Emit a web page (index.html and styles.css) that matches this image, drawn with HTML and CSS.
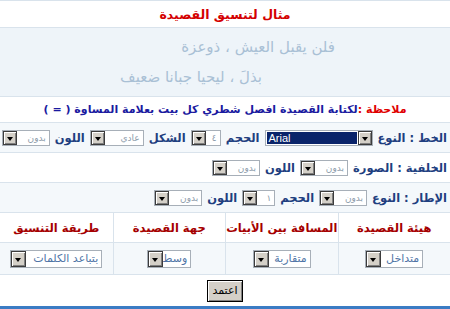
FILE: index.html
```html
<!DOCTYPE html>
<html lang="ar" dir="rtl">
<head>
<meta charset="utf-8">
<link rel="stylesheet" href="styles.css">
</head>
<body>
<div class="panel">
  <div class="row title">مثال لتنسيق القصيدة</div>
  <div class="row poem">
    <div class="verse v1">فلن يقبل العيش ، ذوعزة</div>
    <div class="verse v2">بذلَ ، ليحيا جبانا ضعيف</div>
  </div>
  <div class="row note"><span class="red">ملاحظة :</span> لكتابة القصيدة افصل شطري كل بيت بعلامة المساوة ( = )</div>
  <div class="row ctrl alt">
    <span class="lbl">الخط : النوع</span>
    <span class="sel font" dir="ltr"><span class="txt">Arial</span><span class="arr"></span></span>
    <span class="lbl">الحجم</span>
    <span class="sel w30"><span class="txt">٤</span><span class="arr"></span></span>
    <span class="lbl">الشكل</span>
    <span class="sel w54"><span class="txt">عادي</span><span class="arr"></span></span>
    <span class="lbl">اللون</span>
    <span class="sel w48"><span class="txt">بدون</span><span class="arr"></span></span>
  </div>
  <div class="row ctrl">
    <span class="lbl">الخلفية : الصورة</span>
    <span class="sel w48"><span class="txt">بدون</span><span class="arr"></span></span>
    <span class="lbl">اللون</span>
    <span class="sel w48"><span class="txt">بدون</span><span class="arr"></span></span>
  </div>
  <div class="row ctrl alt">
    <span class="lbl">الإطار : النوع</span>
    <span class="sel w48"><span class="txt">بدون</span><span class="arr"></span></span>
    <span class="lbl">الحجم</span>
    <span class="sel w32"><span class="txt">١</span><span class="arr"></span></span>
    <span class="lbl">اللون</span>
    <span class="sel w48"><span class="txt">بدون</span><span class="arr"></span></span>
  </div>
  <div class="grid4 head">
    <div class="cell">هيئة القصيدة</div>
    <div class="cell">المسافة بين الأبيات</div>
    <div class="cell">جهة القصيدة</div>
    <div class="cell">طريقة التنسيق</div>
  </div>
  <div class="grid4 choices alt">
    <div class="cell"><span class="sel big w58"><span class="txt">متداخل</span><span class="arr"></span></span></div>
    <div class="cell"><span class="sel big w58"><span class="txt">متقاربة</span><span class="arr"></span></span></div>
    <div class="cell"><span class="sel big w44"><span class="txt">وسط</span><span class="arr"></span></span></div>
    <div class="cell"><span class="sel big w92"><span class="txt">بتباعد الكلمات</span><span class="arr"></span></span></div>
  </div>
  <div class="row btnrow"><span class="btn">اعتمد</span></div>
</div>
</body>
</html>
```
FILE: styles.css
```css
html, body {
  margin: 0;
  padding: 0;
  background: #ffffff;
}
body {
  font-family: "DejaVu Sans", sans-serif;
  width: 450px;
  height: 309px;
  overflow: hidden;
}
.panel {
  border-top: 1px solid #d9e3ec;
  border-bottom: 3px solid #3b7cc4;
  display: flex;
  flex-direction: column;
  box-sizing: border-box;
  height: 309px;
}
.row {
  border-bottom: 1px solid #d9e3ec;
  display: flex;
  align-items: center;
}
.alt {
  background: #f4f8fb;
}
.title {
  height: 26px;
  justify-content: center;
  color: #d40000;
  font-weight: bold;
  font-size: 12.5px;
}
.poem {
  height: 68px;
  background: #eef4f9;
  flex-direction: column;
  align-items: flex-start;
  justify-content: center;
  gap: 12px;
  color: #a9c0d5;
  font-size: 15px;
}
.v1 { margin-right: 115px; }
.v2 { margin-right: 188px; }
.note {
  height: 25px;
  justify-content: center;
  color: #1a1aa0;
  font-weight: bold;
  font-size: 11px;
}
.red { color: #e00000; }
.ctrl {
  height: 29px;
  padding-right: 3px;
  gap: 5px;
}
.lbl {
  color: #1f3f80;
  font-weight: bold;
  font-size: 11.5px;
  white-space: nowrap;
}
.sel {
  display: inline-flex;
  height: 16px;
  box-sizing: border-box;
  border: 1px solid #a7afb8;
  background: #fff;
  align-items: stretch;
}
.sel .txt {
  flex: 1;
  font-size: 9px;
  color: #8d9cab;
  display: flex;
  align-items: center;
  padding: 0 3px;
  white-space: nowrap;
  overflow: hidden;
}
.sel .arr {
  width: 14px;
  flex: none;
  box-sizing: border-box;
  background: #d4d0c8;
  border: 1px solid #3c3c3c;
  box-shadow: inset 1px 1px #ffffff, inset -1px -1px #808080;
  position: relative;
}
.sel .arr::after {
  content: "";
  position: absolute;
  left: 3px;
  top: 5px;
  border-left: 3.5px solid transparent;
  border-right: 3.5px solid transparent;
  border-top: 4px solid #000;
}
.sel.font {
  width: 108px;
}
.sel.font .txt {
  background: #0a246a;
  color: #ffffff;
  font-family: "Liberation Sans", Arial, sans-serif;
  font-size: 11px;
  margin: 1px;
  padding: 0 2px;
}
.w30 { width: 30px; }
.w32 { width: 33px; }
.w44 { width: 44px; }
.w48 { width: 48px; }
.w54 { width: 54px; }
.w58 { width: 58px; }
.w92 { width: 92px; }
.grid4 {
  display: grid;
  grid-template-columns: repeat(4, 1fr);
  border-bottom: 1px solid #d9e3ec;
}
.grid4 .cell {
  display: flex;
  align-items: center;
  justify-content: center;
  border-left: 1px solid #d9e3ec;
}
.grid4 .cell:last-child {
  border-left: none;
}
.head {
  height: 30px;
  box-sizing: border-box;
  color: #a50000;
  font-weight: bold;
  font-size: 11.5px;
}
.choices {
  height: 32px;
  box-sizing: border-box;
}
.sel.big {
  height: 18px;
}
.sel.big .txt {
  font-size: 11px;
  color: #4f74a6;
}
.sel.big .arr {
  width: 15px;
}
.sel.big .arr::after {
  top: 6px;
}
.btnrow {
  flex: 1;
  justify-content: center;
  border-bottom: none;
}
.btn {
  display: inline-flex;
  align-items: center;
  justify-content: center;
  width: 36px;
  height: 22px;
  box-sizing: border-box;
  background: #d4d0c8;
  border: 1px solid #000;
  box-shadow: inset 1px 1px #ffffff, inset -1px -1px #808080;
  font-size: 11px;
  color: #000;
}
```
